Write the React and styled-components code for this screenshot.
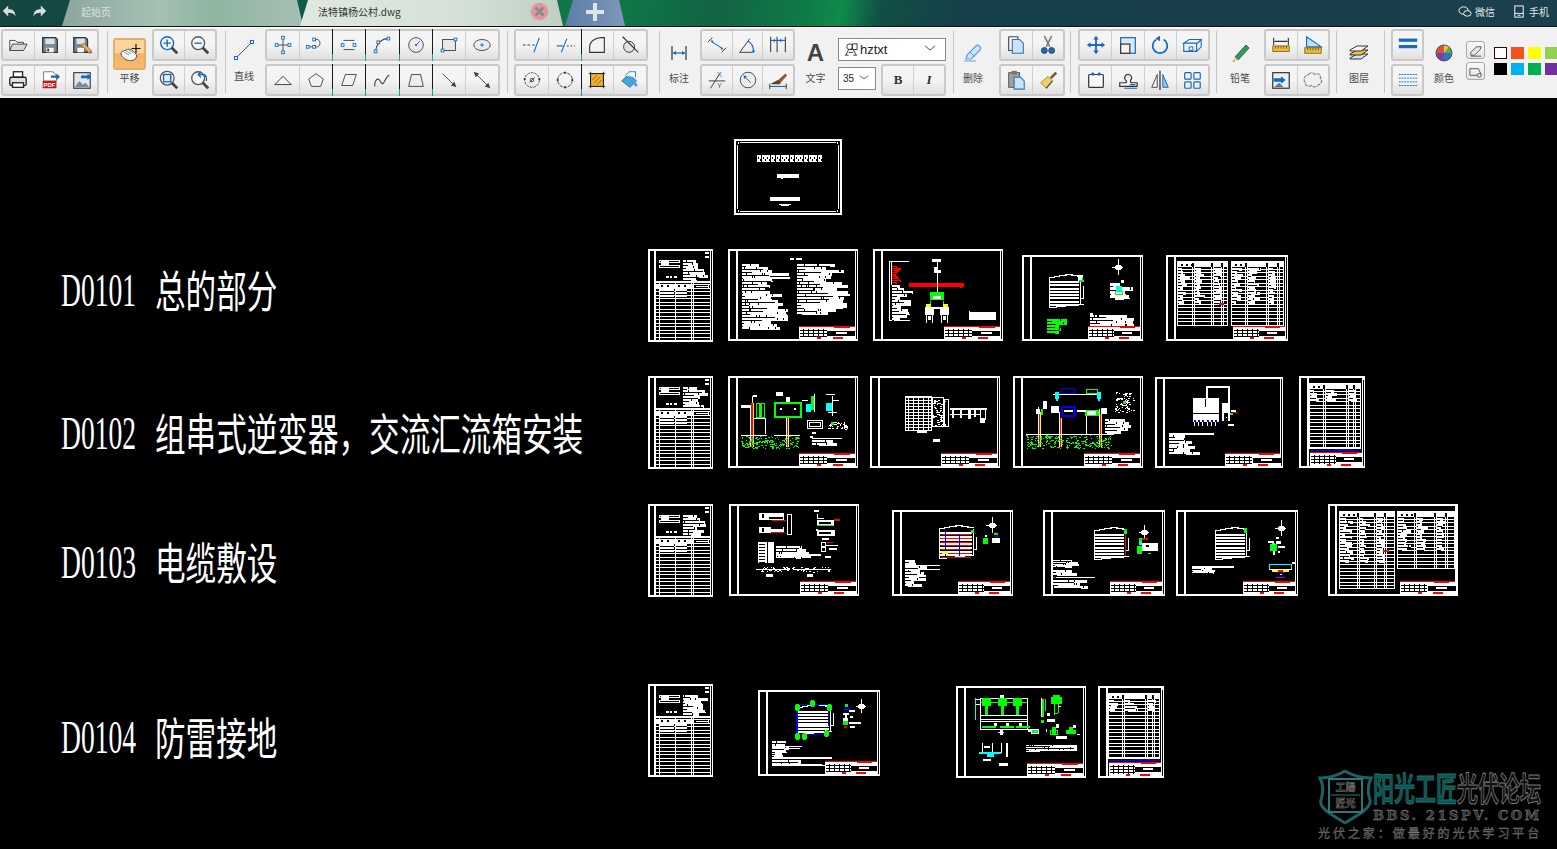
import React from 'react'
import styled, { createGlobalStyle } from 'styled-components'

const GlobalStyle = createGlobalStyle`
    html, body {
        margin: 0;
        background: #000;
        overflow: hidden;
        font-family: "Noto Sans CJK SC", "Liberation Sans", sans-serif;
    }
`
const Page = styled.div`
    width: 1557px;
    height: 849px;
    display: flex;
    flex-direction: column;
    background: #000;
`

/* ---------- title bar ---------- */
const TitleBar = styled.div`
    height: 26px;
    flex: none;
    display: flex;
    border-bottom: 1px solid #111;
    background: linear-gradient(100deg, #154441 0, #0f5a48 19%, #0e7a48 39%, #126343 46%, #0f7c47 52%, #108a4a 54%, #114f45 56.5%, #163f4a 62%, #1c3f4d 100%);
`
const HistoryButtons = styled.div`
    width: 62px;
    display: flex;
    align-items: center;
    gap: 11px;
    padding-left: 1px;
    padding-bottom: 4px;
    box-sizing: border-box;
`
const Tab = styled.div`
    height: 26px;
    flex: none;
    box-sizing: border-box;
    display: flex;
    align-items: center;
    font-size: 10px;
    padding-bottom: 3px;
    clip-path: polygon(8px 0, calc(100% - 6px) 0, 100% 100%, 0 100%);
`
const StartTab = styled(Tab)`
    width: 241px;
    padding-left: 19px;
    color: #d8e2dc;
    background: linear-gradient(90deg, #8ea59f, #a5c1b3 40%, #8fb5a1 62%, #a7bfb4);
`
const FileTab = styled(Tab)`
    width: 263px;
    margin-left: -3px;
    padding-left: 18px;
    justify-content: space-between;
    padding-right: 13px;
    color: #333;
    background: linear-gradient(90deg, #dfe8e0, #d5e1d8 60%, #bfcfc4);
`
const AddTab = styled(Tab)`
    width: 60px;
    margin-left: 2px;
    justify-content: center;
    background: linear-gradient(90deg, #5c7ea9, #7f97b8);
`
const TitleLinks = styled.div`
    margin-left: auto;
    display: flex;
    align-items: center;
    gap: 17px;
    padding-right: 8px;
    padding-bottom: 3px;
`
const TitleLink = styled.div`
    display: flex;
    align-items: center;
    gap: 3px;
    color: #dfe6e8;
    font-size: 10px;
`

/* ---------- ribbon ---------- */
const Ribbon = styled.div`
    height: 71px;
    flex: none;
    box-sizing: border-box;
    padding-top: 2px;
    display: flex;
    background: #f1f1f1;
    box-shadow: inset 0 1px 0 #fff;
`
const Sep = styled.div`
    width: 1px;
    height: 62px;
    margin: 2px 0 0 ${p => p.$ml}px;
    background: #c6c6c6;
    flex: none;
`
const Group = styled.div`
    flex: none;
    width: ${p => p.$w}px;
    margin-left: ${p => p.$ml}px;
    display: flex;
    flex-direction: column;
    gap: 3px;
`
const Row = styled.div`
    height: 32px;
    box-sizing: border-box;
    display: flex;
    border: 2px solid #c9c9c9;
    border-radius: 3px;
    background: linear-gradient(#f4f4f4 0 50%, #e0e0e0 100%);
`
const Cell = styled.div`
    flex: 1;
    position: relative;
    display: flex;
    align-items: center;
    justify-content: center;
    border-right: 1px solid ${p => (p.$hard ? 'transparent' : '#cfcfcf')};
    &:last-child { border-right: none; }
    ${p => p.$hard && `
        &::after {
            content: '';
            position: absolute;
            right: -1px;
            top: -2px;
            bottom: -2px;
            width: 1px;
            background: linear-gradient(#1a1a1a 0 78%, #1d9a9a 78%);
        }
    `}
`
const ToolColumn = styled.div`
    flex: none;
    width: ${p => p.$w}px;
    margin-left: ${p => p.$ml}px;
    display: flex;
    flex-direction: column;
    align-items: center;
    padding-top: ${p => p.$top ?? 12}px;
`
const ToolLabel = styled.div`
    font-size: 10px;
    line-height: 12px;
    color: #4a4a4a;
    margin-top: ${p => p.$mt ?? 7}px;
`
const PanButton = styled.div`
    width: 33px;
    height: 32px;
    box-sizing: border-box;
    border: 2px solid #e0b06a;
    border-radius: 3px;
    display: flex;
    align-items: center;
    justify-content: center;
    background: linear-gradient(#fbd49a 0 46%, #f3b15f 50%, #f5bb72 100%);
`
const BigLetter = styled.div`
    font-family: "Liberation Sans", sans-serif;
    font-size: 24px;
    line-height: 24px;
    font-weight: 700;
    color: #444;
`
const FontControls = styled.div`
    flex: none;
    width: 108px;
    margin-left: 5px;
    display: flex;
    flex-direction: column;
    padding-top: 9px;
    gap: 6px;
`
const FontSelect = styled.div`
    height: 23px;
    box-sizing: border-box;
    border: 1px solid #8a8a8a;
    background: #fff;
    display: flex;
    align-items: center;
    padding: 0 7px 0 4px;
    font-family: "Liberation Sans", sans-serif;
    font-size: 13px;
    color: #222;
    gap: 2px;
    svg:last-child { margin-left: auto; }
`
const FontLower = styled.div`
    display: flex;
    gap: 5px;
    margin-top: -3px;
    align-items: flex-start;
`
const SizeSelect = styled(FontSelect)`
    width: 38px;
    flex: none;
    margin-top: 3px;
    padding: 0 4px;
    font-size: 10px;
`
const StyleRow = styled(Row)`
    flex: 1;
`
const StyleLetter = styled.span`
    font-family: "Liberation Serif", serif;
    font-size: 13px;
    font-weight: 700;
    font-style: ${p => (p.$italic ? 'italic' : 'normal')};
    color: #333;
`
const MiniStack = styled.div`
    flex: none;
    width: 19px;
    margin-left: 3px;
    padding-top: 12px;
    display: flex;
    flex-direction: column;
    gap: 3px;
`
const MiniButton = styled.div`
    height: 18px;
    box-sizing: border-box;
    border: 1px solid #a8a8a8;
    border-radius: 3px;
    background: linear-gradient(#f8f8f8, #e6e6e6);
    display: flex;
    align-items: center;
    justify-content: center;
`
const Swatches = styled.div`
    flex: none;
    margin-left: 9px;
    padding-top: 18px;
    display: grid;
    grid-template-columns: repeat(4, 13px);
    grid-auto-rows: 12px;
    gap: 4px;
`
const Swatch = styled.div`
    background: ${p => p.$c};
    box-sizing: border-box;
    border: ${p => (p.$c === '#fff' ? '1px solid #400' : 'none')};
`

/* ---------- canvas ---------- */
const Canvas = styled.div`
    flex: 1;
    position: relative;
    background: #000;
    overflow: hidden;
`
const SheetSvg = styled.svg`
    position: absolute;
    left: ${p => p.$x}px;
    top: ${p => p.$y - 98}px;
    display: block;
    shape-rendering: crispEdges;
`
const Heading = styled.div`
    position: absolute;
    left: 61px;
    top: ${p => p.$y - 98}px;
    display: flex;
    align-items: center;
    height: 44px;
    white-space: nowrap;
    color: #fff;
`
const HeadingCode = styled.span`
    display: inline-block;
    width: 94px;
    font-family: "Liberation Serif", serif;
    font-size: 46px;
    line-height: 44px;
    transform: scaleX(.6);
    transform-origin: left center;
`
const HeadingName = styled.span`
    display: inline-block;
    margin-top: -4px;
    font-family: "Noto Sans CJK SC", sans-serif;
    font-size: 44px;
    font-weight: 400;
    line-height: 44px;
    transform: scaleX(.695);
    transform-origin: left center;
`
const Watermark = styled.div`
    position: absolute;
    right: 14px;
    bottom: 8px;
    width: 225px;
    display: flex;
    flex-wrap: wrap;
`
const WatermarkLogo = styled.svg`
    flex: none;
    display: block;
`
const WatermarkText = styled.div`
    width: 170px;
    height: 54px;
    display: flex;
    flex-direction: column;
`
const WatermarkTitle = styled.div`
    height: 24px;
    margin: 8px 0 8px;
    font-family: "Liberation Sans", "Noto Sans CJK SC", sans-serif;
    font-size: 21px;
    line-height: 24px;
    font-weight: 700;
    white-space: nowrap;
    transform: scaleY(1.55);
    span { -webkit-text-stroke: .7px #777; color: #111; }
    span:first-child { color: #0f5550; -webkit-text-stroke: .5px #1b7470; }
`
const WatermarkUrl = styled.div`
    font-family: "DejaVu Serif", serif;
    font-size: 12px;
    font-weight: 700;
    line-height: 12px;
    letter-spacing: 2.4px;
    color: #333;
    -webkit-text-stroke: .4px #888;
    white-space: nowrap;
    transform: scaleX(1.08);
    transform-origin: left center;
`
const WatermarkSlogan = styled.div`
    width: 100%;
    margin-top: 1px;
    font-size: 12px;
    line-height: 16px;
    letter-spacing: 2.95px;
    color: #3c3c3c;
    -webkit-text-stroke: .3px #888;
    white-space: nowrap;
`

/* ---------- icons ---------- */
const BLUE = '#1668c0'
const DARK = '#404040'
const Node = ({ x, y }) => <rect x={x - 1.5} y={y - 1.5} width="3" height="3" fill="#fff" stroke={BLUE} />

const icons = {
    open: <><path d="M3 18V7h6l2 2h7v2" fill="#f2f2f2" stroke={DARK} /><path d="M3 18l3-7h16l-4 7z" fill="#d9d9d9" stroke={DARK} /></>,
    save: <><path d="M4 4h14l2 2v14H4z" fill="#7c8794" stroke="#2e3640" strokeWidth="1.4" /><rect x="7" y="5" width="10" height="6" fill="#dfe3e7" /><rect x="8" y="15" width="8" height="5" fill="#f5f5f5" /><rect x="9" y="16" width="2" height="3" fill="#333" /></>,
    saveAs: <><path d="M3 4h13l2 2v14H3z" fill="#7c8794" stroke="#2e3640" strokeWidth="1.4" /><rect x="6" y="5" width="9" height="6" fill="#dfe3e7" /><rect x="7" y="15" width="7" height="5" fill="#f5f5f5" /><path d="M11 12l3-2 8 8-2 3z" fill="#e5b35a" stroke="#7a5a20" strokeWidth=".8" /><path d="M20 21l2-3 1 3z" fill="#c33" /></>,
    print: <><rect x="7" y="3" width="10" height="6" fill="#fff" stroke="#222" strokeWidth="1.4" /><rect x="3" y="9" width="18" height="9" rx="2" fill="#dde1e4" stroke="#222" strokeWidth="1.4" /><rect x="6" y="15" width="12" height="5" fill="#fff" stroke="#222" strokeWidth="1.4" /></>,
    pdf: <><path d="M5 3h10l4 4v6H5z" fill="#fff" stroke="#777" /><rect x="4" y="13" width="15" height="8" fill="#c4161c" /><text x="11.5" y="19.6" fontFamily="Liberation Sans" fontSize="6.5" fontWeight="700" fill="#fff" textAnchor="middle" stroke="none">PDF</text><path d="M13 7h6V5l4 3.5-4 3.500V9.500h-6z" fill={BLUE} /></>,
    picture: <><rect x="3" y="4" width="18" height="17" fill="#dfe8f0" stroke="#333" strokeWidth="1.2" /><path d="M4 20l5-7 4 4 3-2 4 5z" fill="#7b8a96" /><path d="M11 7h7V5l4 3.500-4 3.500V10h-7z" fill={BLUE} /></>,
    pan: <><path d="M3 11c0-2 3-2 5-3s5-1 7 1 5 4 3 7-6 3-9 2-6-4-6-7z" fill="#f7f7f7" stroke="#555" /><path d="M6 10l5 3M7 8l6 4M10 7l5 4" stroke="#777" strokeWidth=".8" /><path d="M18 2v9M13.500 6.500h9" stroke="#111" strokeWidth="1.2" /></>,
    zoomIn: <><circle cx="10" cy="10" r="7" fill="#f5f8fb" stroke={BLUE} strokeWidth="1.5" /><path d="M10 6v8M6 10h8" stroke={BLUE} strokeWidth="1.5" /><path d="M15 15l6 6" stroke="#444" strokeWidth="3" /></>,
    zoomOut: <><circle cx="10" cy="10" r="7" fill="#f5f8fb" stroke="#555" strokeWidth="1.4" /><path d="M6 10h8" stroke={BLUE} strokeWidth="1.500" /><path d="M15 15l6 6" stroke="#444" strokeWidth="3" /></>,
    zoomWin: <><circle cx="10" cy="10" r="7.500" fill="#f5f8fb" stroke="#555" strokeWidth="1.4" /><rect x="6" y="6" width="8" height="8" fill="#e8f1f9" stroke={BLUE} strokeWidth="1.5" /><path d="M15 15l6 6" stroke="#444" strokeWidth="3" /></>,
    zoomPrev: <><circle cx="10" cy="10" r="7" fill="#f5f8fb" stroke="#555" strokeWidth="1.4" /><path d="M19 13v-3c0-3-2-4-5-4h-3M13 3l-3 3 3 3" stroke={BLUE} strokeWidth="1.4" /><path d="M15 15l6 6" stroke="#444" strokeWidth="3" /></>,
    line: <><path d="M5 19L19 5" stroke="#555" /><Node x={4} y={20} /><Node x={20} y={4} /></>,
    point: <><path d="M12 5v14M5 12h14" stroke="#444" /><Node x={12} y={4} /><Node x={5} y={12} /><Node x={19} y={12} /><Node x={12} y={20} /></>,
    polyArc: <><path d="M3 14h11a4.500 4.500 0 0 0 0-8H12" stroke="#444" /><Node x={3} y={14} /><Node x={10} y={14} /><Node x={10} y={6} /></>,
    doubleLine: <><path d="M6 7h12M6 17h12" stroke="#444" /><Node x={5} y={12} /><Node x={18} y={12} /></>,
    arc: <><path d="M5 19C6 10 12 5 19 5" stroke="#444" strokeWidth="1.2" /><Node x={5} y={19} /><Node x={8} y={9} /><Node x={19} y={5} /></>,
    circle: <><circle cx="12" cy="12" r="8" fill="#ececec" stroke="#444" /><path d="M12 12l4-4" stroke={BLUE} /><rect x="11" y="11" width="2" height="2" fill={BLUE} /></>,
    rect: <><rect x="5" y="6" width="14" height="12" fill="#e8e8e8" stroke="#444" /><Node x={5} y={18} /><Node x={19} y={6} /></>,
    ellipse: <><ellipse cx="12" cy="12" rx="9" ry="6" fill="#ececec" stroke="#444" /><path d="M10 12h4M12 10v4" stroke={BLUE} /></>,
    triangle: <path d="M3 17L12 8l9 9z" fill="#f2f2f2" stroke="#333" />,
    pentagon: <path d="M12 5l8 6-3 8H7l-3-8z" fill="#f2f2f2" stroke="#444" />,
    parallelogram: <path d="M8 6h12l-4 12H4z" fill="#f2f2f2" stroke="#444" />,
    spline: <path d="M4 19c0-8 4-10 6-6s3 4 5 0 3-6 5-6" stroke="#444" strokeWidth="1.2" />,
    trapezoid: <path d="M7 6h10l3 13H4z" fill="#ededed" stroke="#444" />,
    arrow: <><path d="M5 5l12 12" stroke="#444" /><path d="M20 20l-6-2 4-4z" fill="#444" /></>,
    bothArrow: <><path d="M6 6l12 12" stroke="#444" /><path d="M3 3l6 2-4 4zM21 21l-6-2 4-4z" fill="#444" /></>,
    extend: <><path d="M2 12h3M7 12h3" stroke="#333" /><path d="M12 12h3M20 4l-6 16" stroke={BLUE} strokeWidth="1.2" /></>,
    trim: <><path d="M14 5L8 20" stroke={BLUE} strokeWidth="1.200" /><path d="M3 13h7M14 13h2M18 13h2M22 13h1" stroke="#333" /></>,
    fillet: <path d="M4 20V14C4 8 10 4 17 4h3v16z" fill="#f4f4f4" stroke="#333" strokeWidth="1.2" />,
    tangent: <><circle cx="11" cy="14" r="6" fill="#dfe4e6" stroke="#333" /><path d="M4 3l17 17" stroke="#333" strokeWidth="1.2" /></>,
    circ2: <><circle cx="12" cy="12" r="8" stroke="#444" strokeDasharray="3 1" /><circle cx="12" cy="12" r="2" stroke="#444" /><path d="M9 15l6-6" stroke="#444" /><rect x="3" y="10" width="2" height="2" fill="#333" /><rect x="19" y="10" width="2" height="2" fill="#333" /></>,
    circ3: <><circle cx="12" cy="12" r="8" stroke="#444" strokeDasharray="4 1" /><rect x="3" y="11" width="2" height="2" fill="#333" /><rect x="19" y="11" width="2" height="2" fill="#333" /><rect x="11" y="3" width="2" height="2" fill="#333" /><rect x="11" y="19" width="2" height="2" fill="#333" /></>,
    hatch: <><rect x="5" y="5" width="14" height="14" fill="#f1b131" stroke="#222" /><path d="M3 5h18M3 19h18M5 3v18M19 3v18" stroke="#222" /><path d="M7 12l5-5M9 15l6-6M12 17l5-5" stroke="#8a5a10" /></>,
    fill: <><path d="M3 13l8-8 8 8-7 7z" fill="#4aa3df" stroke="#2a6fb0" /><path d="M7 7l4-4h7v6" fill="#fff" stroke="#2a6fb0" /><path d="M17 13c3 3 4 5 2 6s-3-2-2-6z" fill="#4aa3df" /></>,
    dimHorizontal: <><path d="M5 5v14M19 5v14" stroke="#333" strokeWidth="1.2" /><path d="M6 12h12" stroke={BLUE} strokeWidth="1.2" /><path d="M6 12l3-2v4zM18 12l-3-2v4z" fill={BLUE} /></>,
    dimAligned: <><path d="M7 4L2 9M22 15l-5 5" stroke="#333" /><path d="M6 8l12 8" stroke={BLUE} strokeWidth="1.200" /><path d="M5 7l3 0-1 3zM19 17l-3 0 1-3z" fill={BLUE} /></>,
    dimAngular: <><path d="M3 20h14M3 20L14 5" stroke="#333" /><path d="M12 8c4 2 6 6 6 11" stroke={BLUE} strokeWidth="1.200" /><path d="M18 21l-2-3h4z" fill={BLUE} /></>,
    dimMulti: <><path d="M4 3v17M11 3v17M20 3v17" stroke="#333" strokeWidth="1.100" /><path d="M4 7h16" stroke={BLUE} strokeWidth="1.300" /><path d="M8 5v4M15 5v4" stroke={BLUE} /></>,
    dimXY: <><path d="M3 13h18" stroke="#333" /><path d="M5 21l10-16" stroke="#333" /><text x="12" y="9" fontSize="8" fontFamily="Liberation Sans" fill={BLUE} stroke="none">X</text><text x="12" y="21" fontSize="8" fontFamily="Liberation Sans" fill={BLUE} stroke="none">Y</text></>,
    dimRadius: <><circle cx="12" cy="12" r="8.500" fill="#ececec" stroke="#444" /><path d="M15 15l-6-6" stroke={BLUE} /><path d="M7 7l4 1-3 3z" fill={BLUE} /></>,
    dimBrush: <><path d="M9 15L20 5l2 2-9 10z" fill="#8c5a36" /><path d="M4 16l8-4 3 4c-3 1-8 1-11 0z" fill="#6b3d1f" /><path d="M3 16v6M21 16v6" stroke="#333" /><path d="M3 19h18" stroke={BLUE} strokeWidth="1.200" /></>,
    fontGlyph: <><circle cx="7" cy="5" r="3" stroke="#333" /><rect x="10" y="2" width="5" height="6" stroke="#333" /><path d="M3 14l3-6h5l3 6M6 11h5M2 14h4M11 14h4" stroke="#333" /></>,
    chevron: <path d="M3 4l5 4 5-4" stroke="#555" />,
    eraser: <><path d="M6 14L15 5c2-2 6 1 4 4l-9 9H5z" fill="#cfe3f5" stroke="#5f9fdc" strokeWidth="1.200" /><path d="M9 11l5 5" stroke="#5f9fdc" /><path d="M3 20h12" stroke="#5f9fdc" /></>,
    copy: <><path d="M4 3h10v3" stroke="#444" strokeWidth="1.200" /><path d="M4 3v15h4" stroke="#444" strokeWidth="1.200" /><path d="M8 6h8l4 4v11H8z" fill="#cde2f4" stroke="#2c78bf" strokeWidth="1.200" /></>,
    cut: <><path d="M8 2l6 12M16 2l-6 12" stroke="#777" strokeWidth="1.600" /><circle cx="8" cy="18" r="3.200" fill="#2e62b0" stroke="#1f4a86" /><circle cx="16" cy="18" r="3.200" fill="#2e62b0" stroke="#1f4a86" /></>,
    paste: <><rect x="4" y="4" width="12" height="16" fill="#9e9e9e" stroke="#555" /><rect x="7" y="2" width="6" height="4" fill="#777" /><path d="M10 9h7l4 4v9H10z" fill="#cde2f4" stroke="#2c78bf" strokeWidth="1.200" /></>,
    broom: <><path d="M14 9l6-6 2 2-6 6z" fill="#7a5a30" /><path d="M4 15l8-7 5 5-7 8z" fill="#efcf6a" stroke="#a88a36" /><path d="M10 21l7-8" stroke="#555" strokeWidth="1.500" /></>,
    move: <><path d="M12 2l3 4h-2v5h5V9l4 3-4 3v-2h-5v5h2l-3 4-3-4h2v-5H6v2l-4-3 4-3v2h5V6H9z" fill={BLUE} /></>,
    scale: <><rect x="4" y="4" width="16" height="17" fill="#d7e8f6" stroke={BLUE} strokeWidth="1.300" /><rect x="4" y="11" width="10" height="10" fill="#f4f4f4" stroke="#333" strokeWidth="1.300" /></>,
    rotate: <><path d="M8 6a8 8 0 1 0 8 0" stroke={BLUE} strokeWidth="2" /><path d="M12 2l-5 3 5 3z" fill={BLUE} /></>,
    box3d: <><path d="M3 10l6-4h13l-4 4zM3 10v9h14V10M17 19l5-5V6" stroke={BLUE} strokeWidth="1.200" /><path d="M9 14h4v4H9z" stroke={BLUE} /></>,
    tabRect: <><rect x="4" y="6" width="16" height="14" rx="1" fill="#f7f7f7" stroke="#333" strokeWidth="1.300" /><rect x="7" y="4" width="3" height="3" fill={BLUE} /><rect x="14" y="4" width="3" height="3" fill={BLUE} /></>,
    block: <><path d="M3 19v-4h6c2 0 2-2 0-3-2-3 1-7 4-6s4 4 2 6c-1 2 0 3 2 3h5v4z" fill="#f5f5f5" stroke="#333" strokeWidth="1.300" /><path d="M8 21h14M14 17h6" stroke={BLUE} strokeWidth="1.200" /></>,
    mirror: <><path d="M12 2v21" stroke="#222" strokeWidth="1.300" /><path d="M9 6v14H3z" fill="#f5f5f5" stroke="#444" /><path d="M15 6v14h6z" fill="#8fc2ec" stroke={BLUE} /></>,
    array: <><rect x="4" y="4" width="7" height="7" rx="1" stroke={BLUE} strokeWidth="1.300" /><rect x="14" y="4" width="7" height="7" rx="1" stroke={BLUE} strokeWidth="1.300" /><rect x="4" y="14" width="7" height="7" rx="1" stroke={BLUE} strokeWidth="1.300" /><rect x="14" y="14" width="7" height="7" rx="1" stroke={BLUE} strokeWidth="1.300" /></>,
    pencil: <><path d="M7 16L18 4l3 3-11 12z" fill="#2f9e57" stroke="#1f6a3a" /><path d="M7 16l3 3-5 2z" fill="#f0c89a" /><path d="M4 21l2-2 1 1z" fill="#d15c1a" /></>,
    ruler: <><path d="M4 4v8M20 4v8M5 8h14" stroke="#333" strokeWidth="1.200" /><rect x="3" y="13" width="18" height="6" fill="#efbd3f" stroke="#8f6b10" /><path d="M6 13v3M9 13v3M12 13v3M15 13v3M18 13v3" stroke="#7a5a10" /></>,
    rulerTri: <><path d="M5 3v11h16z" fill="#bfe0f7" stroke={BLUE} strokeWidth="1.200" /><rect x="3" y="15" width="18" height="6" fill="#efbd3f" stroke="#8f6b10" /><path d="M6 15v3M9 15v3M12 15v3M15 15v3M18 15v3" stroke="#7a5a10" /></>,
    imageIn: <><rect x="3" y="4" width="18" height="17" fill="#e8eff5" stroke="#333" strokeWidth="1.300" /><path d="M4 20l6-5 5 5z" fill="#6c7b88" /><path d="M4 10h8V8l5 4-5 4v-2H4z" fill={BLUE} /></>,
    cloud: <path d="M7 6c2-3 6-2 7 0 3-2 7 0 6 4 3 2 1 7-2 7-1 3-6 3-8 1-3 2-7 0-6-3-3-2-2-7 1-8z" fill="#f0f0f0" stroke="#888" strokeWidth="1.300" strokeDasharray="4 1" />,
    layers: <><path d="M3 17l7-4h11l-7 5H3z" fill="#cfe3f2" stroke="#333" /><path d="M3 13l7-4h11l-7 5H3z" fill="#f1c23c" stroke="#333" /><path d="M3 9l7-4h11l-7 5H3z" fill="#f5f5f5" stroke="#333" /></>,
    lineWeight: <><rect x="2" y="5" width="20" height="3.500" fill={BLUE} /><rect x="2" y="12" width="20" height="3.500" fill={BLUE} /></>,
    lineType: <><path d="M2 6h20M2 10h20M2 14h20M2 18h20" stroke={BLUE} strokeDasharray="2 1" /></>,
    palette: <><circle cx="12" cy="12" r="8" fill="#f1c23c" /><path d="M12 12L4 12a8 8 0 0 1 8-8z" fill="#d7543a" /><path d="M12 12l-8 0a8 8 0 0 0 8 8z" fill="#7c3fa8" /><path d="M12 12v8a8 8 0 0 0 8-8z" fill="#2e73c8" /><path d="M12 12h8a8 8 0 0 0-3-6z" fill="#55ad4d" /><circle cx="12" cy="12" r="8" stroke="#555" /></>,
    miniEraser: <><path d="M3 10l6-6h5l-1 3-6 6H3z" fill="#e6e6e6" stroke="#555" /><path d="M3 14h11" stroke="#555" /></>,
    miniCar: <><path d="M2 12V5h9l3 6" stroke="#555" /><path d="M2 12h8" stroke="#555" /><circle cx="12" cy="12" r="2" stroke="#555" /></>,
    undo: <path d="M2 10l6-6v4c5 0 8 2 8 8-1-3-4-4-8-4v4z" fill="#d6dfe0" />,
    redo: <path d="M18 10l-6-6v4c-5 0-8 2-8 8 1-3 4-4 8-4v4z" fill="#d6dfe0" />,
    wechat: <><ellipse cx="6" cy="6" rx="5" ry="4" stroke="#fff" /><ellipse cx="10" cy="9" rx="4" ry="3" fill="#1b3f4c" stroke="#fff" /></>,
    phone: <><rect x="3" y="1" width="9" height="12" stroke="#fff" /><path d="M3 9h9M6 11h3" stroke="#fff" /></>,
}

const Glyph = styled.svg`
    display: block;
    fill: none;
    flex: none;
`
const Icon = ({ name, size = 24, box = 24 }) => (
    <Glyph width={size} height={size} viewBox={`0 0 ${box} ${box}`}>{icons[name]}</Glyph>
)

const ToolRow = ({ names, hard = [] }) => (
    <Row>
        {names.map((n, i) => (
            <Cell key={n} $hard={hard.includes(i)}><Icon name={n} size={22} /></Cell>
        ))}
    </Row>
)

/* ---------- drawing sheets, all built from pixel-like rects ---------- */
const W = '#fff'
const K = '#000'
const RED = '#f00'
const GREEN = '#0f0'
const CYAN = '#0ff'
const NAVY = '#00f'
const YEL = '#ff0'

const makeSketch = seed => {
    let s = seed
    const rand = () => (s = (s * 16807) % 2147483647) / 2147483647
    const rects = []
    const r = (x, y, w, h, c = W) => rects.push([Math.round(x), Math.round(y), Math.max(1, Math.round(w)), Math.max(1, Math.round(h)), c])
    const box = (x, y, w, h, c = W) => { r(x, y, w, 1, c); r(x, y + h - 1, w, 1, c); r(x, y, 1, h, c); r(x + w - 1, y, 1, h, c) }
    const lines = (x, y, w, h, step = 3, min = .45, c = W) => {
        for (let yy = y; yy < y + h; yy += step) {
            const len = w * (min + (1 - min) * rand())
            r(x, yy, len, step, c)
            r(x, yy + step - 1, len * rand(), 1, K)
            const holes = Math.floor(len / 12)
            for (let i = 0; i < holes; i++) r(x + rand() * len, yy, 1, step - 1, K)
        }
    }
    const frame = (w, h, strip = 8) => {
        box(0, 0, w, h)
        r(0, 1, w, 1)
        r(0, h - 2, w, 1)
        r(1, 0, 1, h)
        r(strip, 0, 2, h)
        r(w - 3, 0, 1, h)
    }
    const title = (w, h, bw = 55, bh = 13, c = RED) => {
        const x = w - bw - 3
        const y = h - bh - 2
        r(x, y + 1, bw, bh - 1)
        for (let i = 0; i < 3; i++) r(x + 1, y + 4 + i * 3, bw * .48, 1, K)
        for (let i = 0; i < 5; i++) r(x + 4 + i * 5, y + 3, 1, bh - 5, K)
        r(x + bw * .5, y + 5, bw * .5, 5, K)
        r(x + bw * .66, y + 6, bw * .2, 2)
        r(x, y, bw, 1, c)
        r(x + bw * .62, y, bw * .28, 2, c)
        r(x + bw * .32, y + bh - 2, 4, 2, c)
        r(x + bw * .6, y + bh - 2, 10, 2, c)
    }
    const grid = (x, y, w, h, cols, step = 4, filled = .25) => {
        box(x, y, w, h)
        r(x, y + 1, w, 1)
        for (let yy = y + 4; yy < y + h - 1; yy += step) r(x, Math.round(yy), w, 1)
        cols.forEach(c => { r(x + c, y, 1, h); r(x + c + 2, y, 1, h) })
        r(x + 1, y + 2, w - 2, 4)
        cols.forEach(c => r(x + c, y + 2, 2, 4, K))
        for (let i = 0; i < 3; i++) r(x + 4 + i * 5, y + 3, 2, 2, K)
        lines(x + 1, y + 7, cols[0] * .8, h * filled, 3, .3)
        lines(x + cols[0] + 3, y + 7, (cols[1] - cols[0]) * .6, h * filled, 3, .3)
        if (cols[2]) lines(x + cols[1] + 3, y + 7, 8, h * filled, 3, .5)
    }
    const index = (w, h) => {
        frame(w, h, 6)
        r(w - 8, 3, 4, 2); r(w - 8, 7, 4, 2)
        box(11, 11, 21, 3); box(11, 16, 21, 3)
        r(13, 12, 8, 5)
        lines(35, 11, 26, 19, 3, .5)
        r(18, 27, 3, 2); r(22, 27, 2, 2); r(26, 27, 3, 2)
        r(6, 32, w - 9, 2)
        for (let yy = 35; yy < h - 2; yy += 3.5) r(6, yy, w - 9, 1)
        ;[11, 27, 43, 45].forEach(c => r(c, 34, 1, h - 36))
        r(7, 35, w - 11, 4)
        ;[13, 19, 30, 36].forEach(c => r(c, 36, 2, 2, K))
        r(12, 40, 14, 10)
        r(28, 40, 11, 9)
        r(46, 36, w - 51, 3, K)
        r(48, 37, 12, 1)
        for (let yy = 42; yy < 50; yy += 3) { r(12, yy, 14, 1, K); r(28, yy, 11, 1, K) }
    }
    const tallTable = (w, h) => {
        frame(w, h, 8)
        r(w - 3, 1, 2, 3)
        grid(10, 7, w - 14, h - 26, [14, 37, 44], 3.5, .18)
        r(10, h - 18, w - 13, 1, NAVY)
        r(36, h - 19, 16, 2, NAVY)
        title(w, h, w - 14, 14, RED)
    }
    const compass = (x, y, len = 10) => {
        r(x, y - len, 1, len * 2)
        r(x - len * .7, y, len * 1.4, 1)
        r(x - 2, y - 2, 5, 5)
        r(x - 3, y - 1, 7, 3)
    }
    const building = (x, y, w, h, n = 8, bar = W) => {
        const step = (h - 8) / n
        for (let i = 0; i < n; i++) r(x, y + 7 + i * step, w - 3, 2, bar)
        r(x, y + 3, 1, h - 4)
        r(x + w - 2, y + 4, 1, h - 8)
        r(x + w - 2, y + h - 10, 4, 1)
        r(x + w + 1, y + h - 22, 1, 12)
        r(x, y + 3, 6, 1); r(x + 5, y + 2, 6, 1); r(x + 10, y + 1, 8, 1); r(x + 16, y, 8, 1); r(x + 22, y + 1, 8, 1); r(x + 28, y + 2, w - 29, 1)
        r(x, y + h - 1, 8, 1); r(x + 7, y + h - 2, 10, 1); r(x + 16, y + h - 3, 10, 1); r(x + 25, y + h - 4, 10, 1)
    }
    const scatter = (x, y, w, h, n, c = GREEN) => {
        for (let i = 0; i < n; i++) r(x + rand() * w, y + rand() * h, 1 + Math.floor(rand() * 2), 1, c)
    }
    return { rects, rand, r, box, lines, frame, title, grid, index, tallTable, compass, building, scatter }
}

const sheets = [
    { x: 734, y: 139, w: 108, h: 76, draw: d => {
        d.box(0, 0, 108, 76); d.r(0, 1, 108, 1); d.r(1, 0, 1, 76); d.r(106, 0, 1, 76); d.r(0, 74, 108, 1)
        d.box(3, 3, 102, 70)
        d.r(3, 3, 3, 3, K); d.r(4, 3, 1, 2); d.r(102, 3, 3, 3, K); d.r(103, 3, 1, 2); d.r(3, 70, 3, 3, K); d.r(4, 71, 1, 2); d.r(102, 70, 3, 3, K); d.r(103, 71, 1, 2)
        for (let i = 0; i < 14; i++) { d.r(23 + i * 4.7, 16, 4, 7); d.r(24 + i * 4.7, 18, 1, 2, K); d.r(26 + i * 4.7, 20, 1, 2, K) }
        d.r(43, 35, 22, 4); d.r(47, 39, 2, 1)
        d.r(36, 58, 30, 4); d.r(45, 65, 12, 1); d.r(47, 66, 8, 1)
    } },

    { x: 648, y: 249, w: 65, h: 93, draw: d => d.index(65, 93) },
    { x: 728, y: 249, w: 130, h: 92, draw: d => {
        d.frame(130, 92, 8)
        d.r(62, 9, 4, 2); d.r(68, 9, 6, 2)
        d.lines(14, 15, 48, 64, 3, .35)
        d.r(34, 28, 28, 2)
        d.lines(69, 15, 52, 50, 3, .5)
        d.r(80, 45, 42, 2)
        d.r(73, 54, 46, 5)
        d.title(130, 92, 56, 13)
    } },
    { x: 873, y: 249, w: 130, h: 92, draw: d => {
        d.frame(130, 92, 8)
        d.r(16, 12, 1, 60); d.r(18, 12, 1, 24); d.r(16, 12, 20, 1); d.r(16, 71, 21, 1)
        d.lines(19, 17, 11, 18, 2, .4, RED)
        d.lines(19, 36, 21, 35, 3, .35)
        d.r(36, 34, 55, 4, RED); d.r(87, 38, 2, 1, RED)
        d.r(64, 10, 1, 38)
        d.r(59, 10, 9, 3); d.r(61, 18, 4, 6); d.r(65, 21, 3, 3)
        d.r(57, 43, 14, 8, GREEN); d.r(60, 47, 8, 3); d.r(57, 52, 1, 3, GREEN); d.r(70, 52, 1, 3, GREEN)
        d.r(53, 55, 5, 3, YEL); d.r(70, 55, 5, 3, YEL)
        d.r(52, 58, 9, 8); d.r(67, 58, 9, 8); d.r(53, 66, 1, 8); d.r(59, 66, 1, 8); d.r(68, 66, 1, 8); d.r(74, 66, 1, 8); d.r(55, 67, 3, 4); d.r(70, 67, 3, 4); d.r(61, 58, 6, 2)
        d.r(96, 63, 27, 8); d.r(96, 62, 1, 1)
        d.title(130, 92, 56, 13)
    } },
    { x: 1022, y: 255, w: 121, h: 86, draw: d => {
        d.frame(121, 86, 8)
        d.building(27, 19, 33, 34)
        d.r(56, 20, 5, 6); d.r(57, 25, 5, 2, GREEN); d.r(60, 22, 1, 3, GREEN)
        d.compass(96, 12, 8)
        d.r(99, 25, 3, 3); d.lines(88, 28, 25, 14, 4, .4)
        d.r(94, 31, 6, 5, CYAN); d.box(93, 36, 8, 4, GREEN); d.r(93, 40, 9, 5)
        d.lines(25, 64, 21, 13, 3, .55, GREEN)
        d.r(68, 58, 3, 3); d.lines(68, 60, 47, 10, 3, .7)
        d.title(121, 86, 52, 13)
    } },
    { x: 1166, y: 255, w: 122, h: 86, draw: d => {
        d.frame(122, 86, 8)
        d.grid(11, 6, 51, 65, [15, 34, 44], 3.5, .55)
        d.grid(65, 6, 53, 65, [14, 35, 46], 3.5, .55)
        d.r(53, 48, 5, 2, RED)
        d.title(122, 86, 52, 13)
    } },

    { x: 648, y: 376, w: 65, h: 93, draw: d => d.index(65, 93) },
    { x: 728, y: 376, w: 130, h: 92, draw: d => {
        d.frame(130, 92, 8)
        d.r(13, 29, 11, 3); d.r(24, 20, 1, 10); d.r(25, 19, 4, 2); d.r(48, 16, 7, 4)
        d.r(23, 27, 2, 44, RED); d.r(25, 27, 1, 44, YEL); d.r(22, 30, 1, 40)
        d.box(28, 27, 9, 15, GREEN); d.r(31, 28, 3, 13, GREEN); d.r(37, 42, 1, 16); d.r(26, 42, 12, 1)
        d.box(46, 26, 28, 16, GREEN); d.box(47, 27, 26, 14, GREEN); d.r(52, 32, 2, 2); d.r(66, 32, 2, 2); d.r(58, 21, 4, 5)
        d.r(58, 42, 1, 29); d.r(59, 42, 1, 29, RED); d.r(60, 42, 1, 29, YEL)
        d.r(78, 28, 5, 8, CYAN); d.r(83, 20, 3, 14, GREEN); d.r(86, 18, 1, 18); d.r(74, 24, 6, 1)
        d.r(98, 27, 6, 8, CYAN); d.r(98, 18, 9, 1); d.r(104, 20, 1, 20); d.r(100, 36, 9, 1); d.r(105, 24, 6, 1)
        d.box(79, 44, 16, 9); d.box(81, 46, 12, 5); d.r(84, 56, 4, 2)
        d.scatter(100, 46, 20, 7, 50, W); d.r(103, 46, 3, 3, GREEN)
        d.r(13, 59, 26, 1); d.r(46, 59, 26, 1)
        d.scatter(13, 60, 58, 12, 150)
        d.r(82, 60, 3, 2); d.r(84, 62, 30, 1); d.lines(84, 64, 30, 6, 3, .7)
        d.title(130, 92, 56, 13)
    } },
    { x: 870, y: 376, w: 130, h: 92, draw: d => {
        d.frame(130, 92, 8)
        for (let i = 0; i < 11; i++) d.r(35, 21 + i * 3, 26, 1)
        for (let i = 0; i < 5; i++) d.r(38 + i * 5, 21, 1, 33)
        d.box(35, 20, 27, 35); d.r(48, 54, 8, 3); d.box(47, 54, 10, 3)
        d.box(62, 21, 12, 30); d.box(74, 23, 5, 28); d.scatter(63, 22, 11, 28, 70, W)
        d.r(80, 32, 37, 2); d.r(80, 38, 30, 1); d.r(82, 34, 2, 8); d.r(90, 34, 2, 8); d.r(98, 34, 3, 9); d.r(104, 34, 2, 7); d.r(110, 34, 1, 8); d.r(115, 34, 1, 10); d.r(110, 42, 5, 5)
        d.r(63, 63, 7, 3)
        d.title(130, 92, 56, 13)
    } },
    { x: 1013, y: 376, w: 130, h: 92, draw: d => {
        d.frame(130, 92, 8)
        d.box(48, 12, 14, 6, NAVY); d.r(48, 17, 15, 2, NAVY); d.box(73, 13, 12, 5, GREEN)
        d.r(40, 18, 48, 1); d.r(42, 16, 4, 7, CYAN); d.r(43, 23, 2, 2, CYAN); d.r(84, 16, 4, 7, CYAN); d.r(85, 23, 2, 2, CYAN)
        d.r(25, 31, 1, 40); d.r(26, 36, 1, 35, RED); d.r(27, 36, 1, 35, YEL); d.r(28, 33, 2, 6, GREEN); d.r(23, 33, 4, 5); d.r(30, 25, 4, 8)
        d.r(46, 36, 1, 35); d.r(47, 42, 1, 29, RED); d.r(48, 42, 1, 29, YEL); d.r(38, 30, 8, 7)
        d.box(48, 30, 15, 11, NAVY); d.box(49, 31, 13, 9, NAVY); d.r(51, 34, 9, 2)
        d.r(72, 34, 14, 6, GREEN); d.r(74, 35, 9, 4); d.r(64, 34, 9, 2); d.r(73, 40, 1, 18)
        d.r(86, 33, 1, 38); d.r(87, 38, 1, 33, RED); d.r(88, 38, 1, 33, YEL); d.r(88, 32, 6, 6)
        d.scatter(102, 16, 18, 20, 90, W); d.r(110, 25, 3, 3, GREEN)
        d.r(13, 58, 88, 1); d.scatter(13, 59, 86, 13, 220)
        d.lines(92, 43, 28, 14, 3, .5)
        d.title(130, 92, 56, 13)
    } },
    { x: 1155, y: 377, w: 128, h: 91, draw: d => {
        d.frame(128, 91, 8)
        d.r(38, 21, 26, 24); d.r(50, 22, 1, 8, K); d.r(38, 36, 26, 1, K)
        d.r(51, 9, 24, 2); d.r(51, 9, 2, 12); d.r(73, 9, 2, 20)
        for (let i = 0; i < 6; i++) { d.r(39 + i * 4.2, 45, 1, 4); d.r(39 + i * 4.2, 43, 2, 2, NAVY) }
        d.r(67, 26, 8, 10); d.r(67, 26, 2, 18); d.r(73, 30, 2, 14); d.r(76, 33, 5, 2); d.r(78, 35, 5, 1, RED); d.r(75, 36, 3, 2, GREEN); d.r(71, 40, 1, 1); d.r(73, 47, 6, 2)
        d.r(14, 56, 45, 2); d.lines(14, 58, 25, 10, 3, .6); d.lines(14, 69, 34, 8, 3, .6)
        d.title(128, 91, 55, 13)
    } },
    { x: 1299, y: 376, w: 66, h: 92, draw: d => d.tallTable(66, 92) },

    { x: 648, y: 504, w: 65, h: 93, draw: d => d.index(65, 93) },
    { x: 729, y: 504, w: 130, h: 92, draw: d => {
        d.frame(130, 92, 8)
        d.r(30, 9, 25, 7); d.r(33, 10, 2, 4, K); d.r(40, 13, 14, 2, K); d.r(43, 16, 14, 1, RED)
        d.r(30, 23, 25, 6); d.r(33, 24, 2, 4, K); d.r(42, 28, 14, 1, RED); d.r(42, 23, 12, 2, K)
        d.box(58, 10, 5, 21)
        d.r(85, 6, 5, 2); d.r(88, 10, 1, 5); d.r(88, 14, 7, 1); d.r(88, 16, 17, 6); d.r(90, 18, 12, 2, K); d.r(88, 21, 16, 1, GREEN); d.r(105, 15, 6, 2, RED)
        d.r(88, 26, 18, 6); d.r(90, 28, 12, 2, K); d.r(87, 25, 2, 2); d.r(93, 34, 7, 2)
        d.r(29, 38, 16, 21); for (let i = 0; i < 7; i++) d.r(30, 40 + i * 3, 6, 1, K); d.r(38, 38, 1, 21, K)
        d.lines(47, 42, 36, 10, 3, .7); d.r(47, 50, 45, 2); d.lines(47, 53, 25, 2, 2, 1)
        d.box(92, 38, 5, 5); d.box(92, 43, 5, 5); d.r(97, 41, 12, 1); d.r(98, 38, 6, 1, RED); d.r(100, 44, 8, 2); d.r(96, 52, 6, 2)
        d.r(27, 65, 34, 1); d.r(64, 65, 38, 1); d.scatter(28, 63, 72, 5, 60, W); d.r(37, 70, 7, 3); d.r(78, 70, 6, 3)
        d.title(130, 92, 56, 13)
    } },
    { x: 892, y: 510, w: 121, h: 86, draw: d => {
        d.frame(121, 86, 8)
        d.building(47, 15, 36, 34, 7)
        for (let i = 0; i < 7; i++) d.r(49, 24 + i * 3.8, 30, 1, RED)
        d.r(53, 18, 1, 28, NAVY); d.r(67, 24, 1, 22, NAVY); d.r(50, 41, 6, 3, YEL); d.r(79, 20, 3, 3, GREEN)
        d.compass(100, 15, 8)
        d.r(91, 28, 5, 6, GREEN); d.r(93, 25, 2, 2); d.r(103, 26, 4, 3, NAVY); d.r(100, 28, 8, 5); d.r(102, 23, 4, 2, GREEN); d.r(101, 30, 2, 1, YEL)
        d.lines(13, 50, 22, 27, 3, .4); d.r(13, 55, 35, 1); d.r(13, 59, 35, 1); d.r(20, 65, 14, 2)
        d.title(121, 86, 52, 13)
    } },
    { x: 1043, y: 510, w: 122, h: 86, draw: d => {
        d.frame(122, 86, 8)
        d.building(51, 17, 33, 33)
        d.r(82, 22, 1, 24, RED); d.r(81, 19, 3, 5, GREEN)
        d.compass(101, 22, 7)
        d.r(96, 28, 3, 4, GREEN); d.r(96, 32, 3, 3, CYAN); d.r(94, 36, 5, 8, GREEN); d.r(99, 28, 6, 2, RED); d.r(99, 33, 16, 8); d.r(103, 35, 3, 2, K); d.r(105, 43, 3, 1, GREEN)
        d.lines(10, 50, 30, 8, 2, .6); d.lines(10, 60, 26, 6, 3, .5); d.r(10, 67, 42, 1); d.r(10, 67, 3, 1, RED); d.lines(10, 70, 35, 8, 3, .6)
        d.title(122, 86, 52, 13)
    } },
    { x: 1176, y: 510, w: 122, h: 86, draw: d => {
        d.frame(122, 86, 8)
        d.building(39, 17, 33, 33)
        d.r(68, 18, 3, 5, GREEN)
        d.compass(105, 18, 8)
        d.r(100, 27, 3, 2); d.r(92, 31, 6, 2); d.r(100, 31, 5, 3); d.r(94, 34, 7, 7, GREEN); d.r(96, 33, 3, 2, CYAN); d.r(102, 36, 7, 2); d.r(102, 41, 2, 2); d.r(97, 41, 2, 4)
        d.r(93, 54, 22, 1, CYAN); d.r(93, 54, 1, 6, CYAN); d.r(115, 54, 1, 6, CYAN); d.r(94, 59, 22, 1, W); d.r(96, 60, 6, 2, YEL); d.r(102, 60, 5, 2, RED); d.r(107, 60, 6, 2, YEL); d.r(100, 62, 9, 1, NAVY); d.r(104, 64, 2, 1); d.r(100, 67, 9, 1, '#90f'); d.r(116, 52, 3, 2)
        d.r(16, 56, 42, 2); d.lines(16, 58, 24, 6, 2, .8)
        d.title(122, 86, 52, 13)
    } },
    { x: 1328, y: 504, w: 130, h: 92, draw: d => {
        d.frame(130, 92, 7)
        d.r(127, 2, 2, 88)
        d.grid(11, 7, 56, 78, [18, 35, 45], 3.5, .55)
        d.grid(69, 7, 58, 58, [17, 37, 48], 3.5, .55)
        d.r(55, 46, 6, 2, RED)
        d.title(130, 92, 55, 13)
    } },

    { x: 648, y: 684, w: 65, h: 93, draw: d => d.index(65, 93) },
    { x: 758, y: 690, w: 122, h: 86, draw: d => {
        d.frame(122, 86, 8)
        d.building(39, 14, 35, 31)
        d.r(38, 18, 2, 26, NAVY); d.r(38, 44, 30, 1, NAVY); d.r(42, 14, 28, 1, NAVY); d.r(70, 16, 1, 20, NAVY)
        ;[[39, 15], [54, 11], [71, 15], [39, 44], [46, 44], [68, 41]].forEach(([x, y]) => { d.r(x - 2, y, 5, 5, GREEN); d.r(x - 1, y - 1, 3, 7, GREEN) })
        d.compass(103, 16, 7)
        d.r(87, 14, 3, 3, GREEN); d.r(86, 18, 7, 2, NAVY); d.r(91, 20, 6, 2); d.r(85, 23, 6, 2); d.r(87, 25, 2, 3); d.r(85, 28, 5, 3); d.r(92, 26, 3, 2); d.r(85, 31, 5, 4, GREEN); d.r(91, 32, 12, 2); d.r(86, 36, 3, 2, RED); d.r(92, 36, 5, 2)
        d.lines(14, 51, 22, 10, 3, .6); d.r(14, 56, 30, 1); d.r(14, 58, 28, 1); d.lines(14, 63, 12, 4, 2, .8); d.r(14, 67, 60, 2); d.lines(14, 70, 34, 5, 3, .7); d.r(14, 74, 50, 2); d.r(64, 75, 12, 1)
        d.title(122, 86, 52, 13)
    } },
    { x: 956, y: 686, w: 130, h: 92, draw: d => {
        d.frame(130, 92, 8)
        d.r(24, 12, 48, 1); d.r(20, 13, 5, 1); d.r(20, 18, 5, 1); d.r(19, 12, 1, 22, CYAN); d.r(44, 9, 4, 3)
        d.r(25, 16, 46, 1, GREEN)
        ;[30, 46, 61].forEach(x => { d.r(x - 4, 12, 9, 8, GREEN); d.r(x - 1, 20, 3, 9, GREEN) })
        d.r(24, 29, 47, 1); d.r(71, 12, 1, 32); d.r(24, 14, 1, 30)
        d.r(24, 33, 48, 1); d.r(24, 35, 48, 1); d.r(24, 43, 48, 1)
        ;[24, 42, 58].forEach(x => d.r(x + 2, 40, 14, 2, GREEN))
        ;[38, 50, 63].forEach(x => d.r(x, 37, 3, 3))
        d.r(44, 44, 3, 5); d.r(42, 46, 6, 1)
        d.r(85, 12, 1, 19); d.r(86, 13, 2, 18, GREEN); d.r(89, 13, 1, 12, GREEN); d.r(91, 27, 3, 3); d.r(95, 11, 11, 7, GREEN); d.r(97, 9, 7, 2, GREEN); d.r(98, 18, 1, 11, GREEN); d.r(102, 18, 1, 9, GREEN); d.r(99, 27, 3, 1, GREEN); d.r(102, 20, 3, 1); d.r(85, 34, 3, 3, GREEN); d.r(91, 33, 8, 3)
        d.r(72, 43, 3, 3); d.box(75, 43, 8, 5); d.r(76, 44, 6, 3, GREEN); d.r(77, 45, 4, 1, CYAN); d.r(90, 43, 1, 3); d.box(94, 44, 8, 5, GREEN); d.r(96, 41, 4, 7, GREEN); d.r(100, 38, 3, 4); d.r(110, 44, 10, 4, GREEN); d.r(113, 41, 4, 6, GREEN); d.r(117, 39, 3, 3); d.r(100, 50, 11, 3); d.r(121, 48, 3, 1)
        d.r(26, 57, 1, 10); d.r(36, 57, 1, 10); d.r(45, 57, 1, 10); d.r(23, 66, 22, 2, CYAN); d.r(31, 68, 7, 3, CYAN); d.r(28, 60, 6, 2); d.r(50, 57, 2, 14); d.r(27, 73, 8, 2); d.r(43, 77, 9, 3)
        d.lines(70, 59, 51, 6, 2, 1); d.r(70, 65, 14, 1)
        d.title(130, 92, 56, 13)
    } },
    { x: 1098, y: 686, w: 66, h: 92, draw: d => d.tallTable(66, 92) },
]

const Sheet = ({ x, y, w, h, draw, seed }) => {
    const d = makeSketch(seed)
    draw(d)
    return (
        <SheetSvg $x={x} $y={y} width={w} height={h} viewBox={`0 0 ${w} ${h}`}>
            {d.rects.map(([rx, ry, rw, rh, c], i) => (
                <rect key={i} x={rx} y={ry} width={rw} height={rh} fill={c} />
            ))}
        </SheetSvg>
    )
}

const headings = [
    { y: 269, code: 'D0101', name: '总的部分' },
    { y: 412, code: 'D0102', name: '组串式逆变器，交流汇流箱安装' },
    { y: 541, code: 'D0103', name: '电缆敷设' },
    { y: 716, code: 'D0104', name: '防雷接地' },
]

const swatches = ['#fff', '#f4511e', '#ffff00', '#92d050', '#000', '#00b0f0', '#00b050', '#7030a0']

export default function App() {
    return (
        <Page>
            <GlobalStyle />
            <TitleBar>
                <HistoryButtons>
                    <Icon name="undo" size={18} box={20} />
                    <Icon name="redo" size={18} box={20} />
                </HistoryButtons>
                <StartTab>起始页</StartTab>
                <FileTab>
                    <span>法特镇杨公村.dwg</span>
                    <svg width="21" height="21" viewBox="0 0 21 21">
                        <circle cx="10.500" cy="10.500" r="9" fill="#d99a9c" stroke="#eab8b8" />
                        <path d="M6.500 6.500l8 8M14.500 6.500l-8 8" stroke="#8a8a8a" strokeWidth="2.500" />
                    </svg>
                </FileTab>
                <AddTab>
                    <svg width="20" height="20" viewBox="0 0 20 20">
                        <path d="M8 1h4v7h7v4h-7v7H8v-7H1V8h7z" fill="#dfe3ee" />
                    </svg>
                </AddTab>
                <TitleLinks>
                    <TitleLink><Icon name="wechat" size={14} box={15} />微信</TitleLink>
                    <TitleLink><Icon name="phone" size={14} box={15} />手机</TitleLink>
                </TitleLinks>
            </TitleBar>

            <Ribbon>
                <Group $w={98} $ml={1}>
                    <ToolRow names={['open', 'save', 'saveAs']} />
                    <ToolRow names={['print', 'pdf', 'picture']} />
                </Group>
                <Sep $ml={8} />
                <ToolColumn $w={33} $ml={5} $top={9}>
                    <PanButton><Icon name="pan" size={24} /></PanButton>
                    <ToolLabel $mt={2}>平移</ToolLabel>
                </ToolColumn>
                <Group $w={65} $ml={6}>
                    <ToolRow names={['zoomIn', 'zoomOut']} />
                    <ToolRow names={['zoomWin', 'zoomPrev']} />
                </Group>
                <Sep $ml={8} />
                <ToolColumn $w={34} $ml={1} $top={9}>
                    <Icon name="line" />
                    <ToolLabel $mt={8}>直线</ToolLabel>
                </ToolColumn>
                <Group $w={235} $ml={4}>
                    <ToolRow names={['point', 'polyArc', 'doubleLine', 'arc', 'circle', 'rect', 'ellipse']} hard={[1, 2, 3, 4]} />
                    <ToolRow names={['triangle', 'pentagon', 'parallelogram', 'spline', 'trapezoid', 'arrow', 'bothArrow']} hard={[1, 2, 3, 4]} />
                </Group>
                <Sep $ml={7} />
                <Group $w={134} $ml={6}>
                    <ToolRow names={['extend', 'trim', 'fillet', 'tangent']} hard={[1]} />
                    <ToolRow names={['circ2', 'circ3', 'hatch', 'fill']} hard={[1]} />
                </Group>
                <Sep $ml={11} />
                <ToolColumn $w={36} $ml={1}>
                    <Icon name="dimHorizontal" />
                    <ToolLabel>标注</ToolLabel>
                </ToolColumn>
                <Group $w={95} $ml={3}>
                    <ToolRow names={['dimAligned', 'dimAngular', 'dimMulti']} />
                    <ToolRow names={['dimXY', 'dimRadius', 'dimBrush']} />
                </Group>
                <ToolColumn $w={35} $ml={3}>
                    <BigLetter>A</BigLetter>
                    <ToolLabel>文字</ToolLabel>
                </ToolColumn>
                <FontControls>
                    <FontSelect>
                        <Icon name="fontGlyph" size={15} box={16} />
                        hztxt
                        <Icon name="chevron" size={16} box={16} />
                    </FontSelect>
                    <FontLower>
                        <SizeSelect>
                            35
                            <Icon name="chevron" size={14} box={16} />
                        </SizeSelect>
                        <StyleRow>
                            <Cell><StyleLetter>B</StyleLetter></Cell>
                            <Cell><StyleLetter $italic>I</StyleLetter></Cell>
                        </StyleRow>
                    </FontLower>
                </FontControls>
                <Sep $ml={7} />
                <ToolColumn $w={30} $ml={4}>
                    <Icon name="eraser" />
                    <ToolLabel>删除</ToolLabel>
                </ToolColumn>
                <Group $w={66} $ml={11}>
                    <ToolRow names={['copy', 'cut']} />
                    <ToolRow names={['paste', 'broom']} />
                </Group>
                <Sep $ml={5} />
                <Group $w={132} $ml={7}>
                    <ToolRow names={['move', 'scale', 'rotate', 'box3d']} />
                    <ToolRow names={['tabRect', 'block', 'mirror', 'array']} />
                </Group>
                <Sep $ml={6} />
                <ToolColumn $w={34} $ml={6}>
                    <Icon name="pencil" />
                    <ToolLabel>铅笔</ToolLabel>
                </ToolColumn>
                <Group $w={66} $ml={7}>
                    <ToolRow names={['ruler', 'rulerTri']} />
                    <ToolRow names={['imageIn', 'cloud']} />
                </Group>
                <Sep $ml={6} />
                <ToolColumn $w={34} $ml={5}>
                    <Icon name="layers" />
                    <ToolLabel>图层</ToolLabel>
                </ToolColumn>
                <Sep $ml={8} />
                <Group $w={33} $ml={6}>
                    <ToolRow names={['lineWeight']} />
                    <ToolRow names={['lineType']} />
                </Group>
                <ToolColumn $w={38} $ml={1}>
                    <Icon name="palette" />
                    <ToolLabel>颜色</ToolLabel>
                </ToolColumn>
                <MiniStack>
                    <MiniButton><Icon name="miniEraser" size={15} box={16} /></MiniButton>
                    <MiniButton><Icon name="miniCar" size={15} box={16} /></MiniButton>
                </MiniStack>
                <Swatches>
                    {swatches.map(c => <Swatch key={c} $c={c} />)}
                </Swatches>
            </Ribbon>

            <Canvas>
                {sheets.map((s, i) => <Sheet key={i} {...s} seed={i * 977 + 131} />)}
                {headings.map(h => (
                    <Heading key={h.code} $y={h.y}>
                        <HeadingCode>{h.code}</HeadingCode>
                        <HeadingName>{h.name}</HeadingName>
                    </Heading>
                ))}
                <Watermark>
                    <WatermarkLogo width="55" height="54" viewBox="0 0 55 54">
                        <path d="M2 8c8 0 17-2 25-7 8 5 17 7 26 7-4 8-3 16-1 22 2 8-14 16-25 23C16 46 0 38 3 30 5 22 6 16 2 8z" fill="none" stroke="#1c6260" strokeWidth="3" />
                        <rect x="11" y="9" width="33" height="33" fill="none" stroke="#2a7a76" strokeWidth="2" />
                        <path d="M13 25h29" stroke="#2a7a76" />
                        <text x="27.500" y="21" fontSize="10" fontWeight="700" fontFamily="Noto Sans CJK TC" fill="#222" stroke="#888" strokeWidth=".4" textAnchor="middle">工陽</text>
                        <text x="27.500" y="37" fontSize="10" fontWeight="700" fontFamily="Noto Sans CJK TC" fill="#222" stroke="#888" strokeWidth=".4" textAnchor="middle">匠光</text>
                    </WatermarkLogo>
                    <WatermarkText>
                        <WatermarkTitle><span>阳光工匠</span><span>光伏论坛</span></WatermarkTitle>
                        <WatermarkUrl>BBS. 21SPV. COM</WatermarkUrl>
                    </WatermarkText>
                    <WatermarkSlogan>光伏之家：做最好的光伏学习平台</WatermarkSlogan>
                </Watermark>
            </Canvas>
        </Page>
    )
}
